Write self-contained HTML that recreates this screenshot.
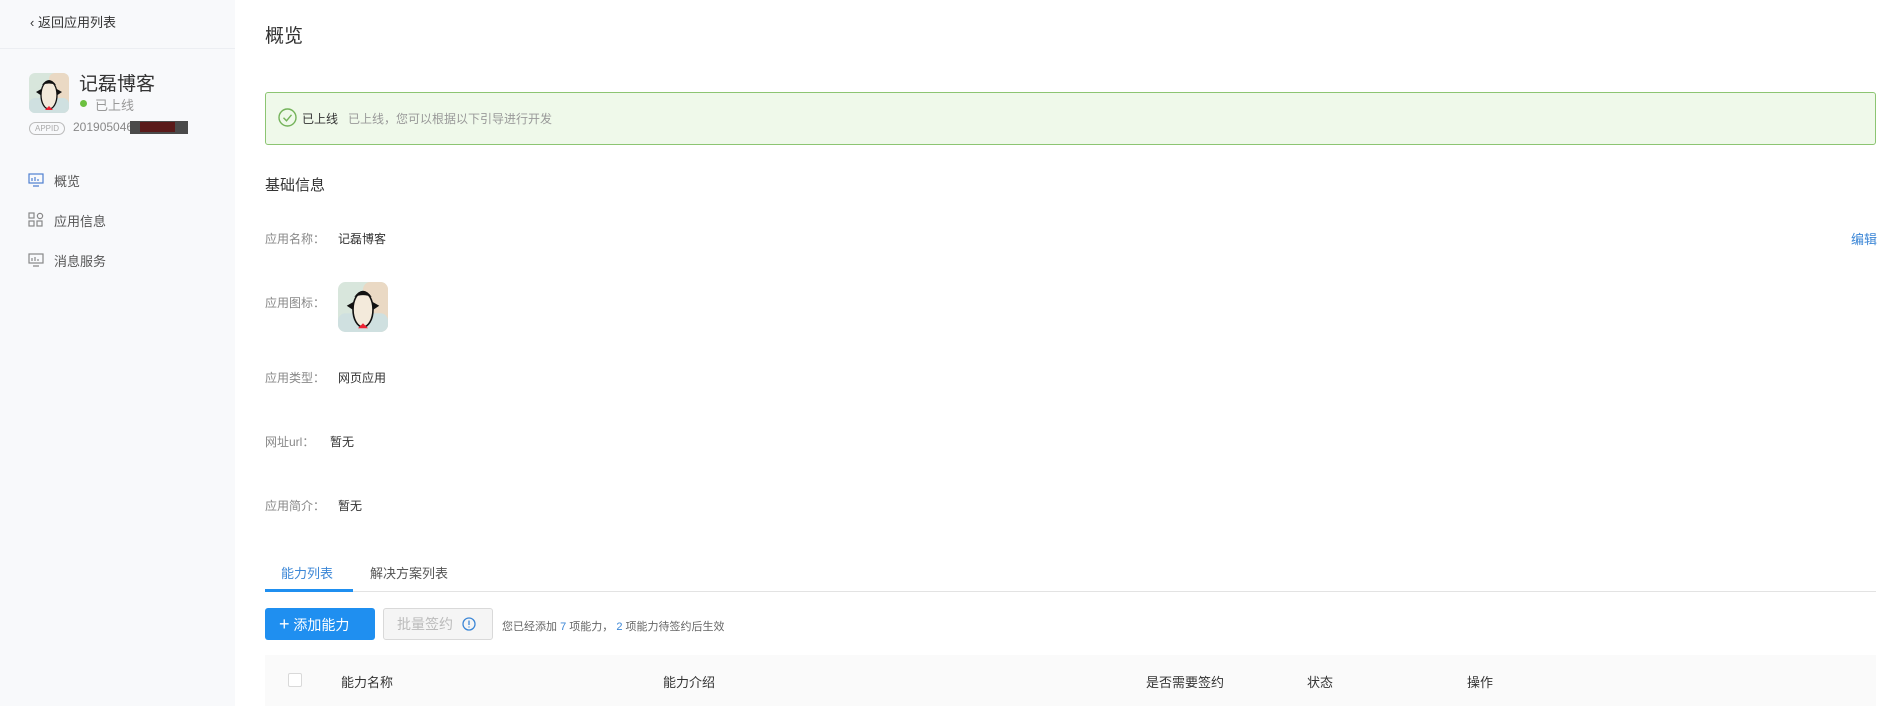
<!DOCTYPE html>
<html><head><meta charset="utf-8"><style>
*{margin:0;padding:0;box-sizing:border-box}
body{width:1880px;height:706px;overflow:hidden;background:#fff;font-family:"Liberation Sans","Noto Sans CJK SC",sans-serif;color:#333;position:relative}
.a{position:absolute;white-space:nowrap}
#side{position:absolute;left:0;top:0;width:235px;height:706px;background:#f8f9fb}
.lbl{color:#888;font-size:12px}
.val{color:#333;font-size:12px}
</style></head><body>
<svg width="0" height="0" style="position:absolute"><defs>
<symbol id="peng" viewBox="0 0 40 40">
<rect width="40" height="40" rx="6" fill="#d8e6dc"/>
<rect x="20" width="20" height="40" rx="6" fill="#ead9c4"/>
<rect x="0" y="25" width="40" height="15" rx="6" fill="#cfe0e0"/>
<path d="M7 19 L14 15 L13 23Z M33 19 L26 15 L27 23Z" fill="#111"/>
<ellipse cx="20" cy="22" rx="8" ry="14" fill="#f3eadb" stroke="#111" stroke-width="1.3"/>
<path d="M13 12 Q20 2 27 12 Q20 9 13 12Z" fill="#111"/>
<path d="M16 37 L20 33 L24 37Z" fill="#e23"/>
</symbol></defs></svg>
<div id="side">
<div class="a" style="left:30px;top:12px;font-size:13px;color:#333">‹&nbsp;返回应用列表</div>
<div class="a" style="left:0;top:48px;width:235px;height:1px;background:#eceef2"></div>
<svg class="a" style="left:29px;top:73px" width="40" height="40"><use href="#peng"/></svg>
<div class="a" style="left:79px;top:69px;font-size:19px;color:#333">记磊博客</div>
<div class="a" style="left:80px;top:100px;width:7px;height:7px;border-radius:50%;background:#6cc040"></div>
<div class="a" style="left:95px;top:95px;font-size:13px;color:#999">已上线</div>
<div class="a" style="left:29px;top:122px;width:36px;height:13px;border:1px solid #bbb;border-radius:7px;font-size:8px;color:#aaa;text-align:center;line-height:11px">APPID</div>
<div class="a" style="left:73px;top:120px;font-size:12px;color:#888">201905046</div>
<div class="a" style="left:130px;top:121px;width:58px;height:13px;background:#4a4a4a"></div>
<div class="a" style="left:140px;top:122px;width:35px;height:10px;background:#5a1a1a"></div>
<svg class="a" style="left:28px;top:172px" width="16" height="16" fill="none" stroke="#4f7fd0" stroke-width="1.2"><rect x="1" y="2" width="14" height="9"/><path d="M4 9V6M7 9V5M10 9V7M5 14h6"/></svg>
<div class="a" style="left:54px;top:171px;font-size:13px;color:#555">概览</div>
<svg class="a" style="left:28px;top:212px" width="16" height="16" fill="none" stroke="#888" stroke-width="1.2"><rect x="1" y="1" width="5" height="5"/><circle cx="12" cy="4" r="2.6"/><rect x="1" y="9" width="5" height="5"/><rect x="9" y="9" width="5" height="5"/></svg>
<div class="a" style="left:54px;top:211px;font-size:13px;color:#555">应用信息</div>
<svg class="a" style="left:28px;top:252px" width="16" height="16" fill="none" stroke="#888" stroke-width="1.2"><rect x="1" y="2" width="14" height="9"/><path d="M4 9V6M7 9V5M10 9V7M5 14h6"/></svg>
<div class="a" style="left:54px;top:251px;font-size:13px;color:#555">消息服务</div>
</div>
<div class="a" style="left:265px;top:21px;font-size:19px;color:#333">概览</div>
<div class="a" style="left:265px;top:92px;width:1611px;height:53px;background:#eff9ea;border:1px solid #8cc572;border-radius:3px"></div>
<svg class="a" style="left:278px;top:108px" width="19" height="19" fill="none" stroke="#74b35a" stroke-width="1.4"><circle cx="9.5" cy="9.5" r="8.5"/><path d="M5.5 9.8l3 3 5-6"/></svg>
<div class="a" style="left:302px;top:110px;font-size:12px;color:#333">已上线</div>
<div class="a" style="left:348px;top:110px;font-size:12px;color:#999">已上线，您可以根据以下引导进行开发</div>
<div class="a" style="left:265px;top:174px;font-size:15px;color:#333">基础信息</div>
<div class="a lbl" style="left:265px;top:230px">应用名称：</div>
<div class="a val" style="left:338px;top:230px">记磊博客</div>
<div class="a" style="left:1851px;top:229px;font-size:13px;color:#3b86d6">编辑</div>
<div class="a lbl" style="left:265px;top:294px">应用图标：</div>
<svg class="a" style="left:338px;top:282px" width="50" height="50"><use href="#peng"/></svg>
<div class="a lbl" style="left:265px;top:369px">应用类型：</div>
<div class="a val" style="left:338px;top:369px">网页应用</div>
<div class="a lbl" style="left:265px;top:433px">网址url：</div>
<div class="a val" style="left:330px;top:433px">暂无</div>
<div class="a lbl" style="left:265px;top:497px">应用简介：</div>
<div class="a val" style="left:338px;top:497px">暂无</div>
<div class="a" style="left:281px;top:563px;font-size:13px;color:#3b86d6">能力列表</div>
<div class="a" style="left:370px;top:563px;font-size:13px;color:#555">解决方案列表</div>
<div class="a" style="left:265px;top:591px;width:1611px;height:1px;background:#e3e3e3"></div>
<div class="a" style="left:265px;top:589px;width:88px;height:3px;background:#1f8ff0"></div>
<div class="a" style="left:265px;top:608px;width:110px;height:32px;background:#1f8ff0;border-radius:3px;color:#fff;font-size:14px;line-height:32px;padding-left:14px"><span style="font-size:18px">+</span>&nbsp;添加能力</div>
<div class="a" style="left:383px;top:608px;width:110px;height:32px;background:#f5f5f5;border:1px solid #d9d9d9;border-radius:3px;color:#bbb;font-size:14px;line-height:30px;padding-left:13px">批量签约</div>
<svg class="a" style="left:462px;top:617px" width="14" height="14" fill="none" stroke="#3b86d6" stroke-width="1.3"><circle cx="7" cy="7" r="6"/><path d="M7 3.5v4.5M7 9.5v1"/></svg>
<div class="a" style="left:502px;top:618px;font-size:11px;color:#666">您已经添加 <span style="color:#3b86d6">7</span> 项能力， <span style="color:#3b86d6">2</span> 项能力待签约后生效</div>
<div class="a" style="left:265px;top:655px;width:1611px;height:51px;background:#fafafa"></div>
<div class="a" style="left:288px;top:673px;width:14px;height:14px;background:#fff;border:1px solid #d9d9d9;border-radius:2px"></div>
<div class="a" style="left:341px;top:672px;font-size:13px;color:#333">能力名称</div>
<div class="a" style="left:663px;top:672px;font-size:13px;color:#333">能力介绍</div>
<div class="a" style="left:1146px;top:672px;font-size:13px;color:#333">是否需要签约</div>
<div class="a" style="left:1307px;top:672px;font-size:13px;color:#333">状态</div>
<div class="a" style="left:1467px;top:672px;font-size:13px;color:#333">操作</div>
</body></html>
